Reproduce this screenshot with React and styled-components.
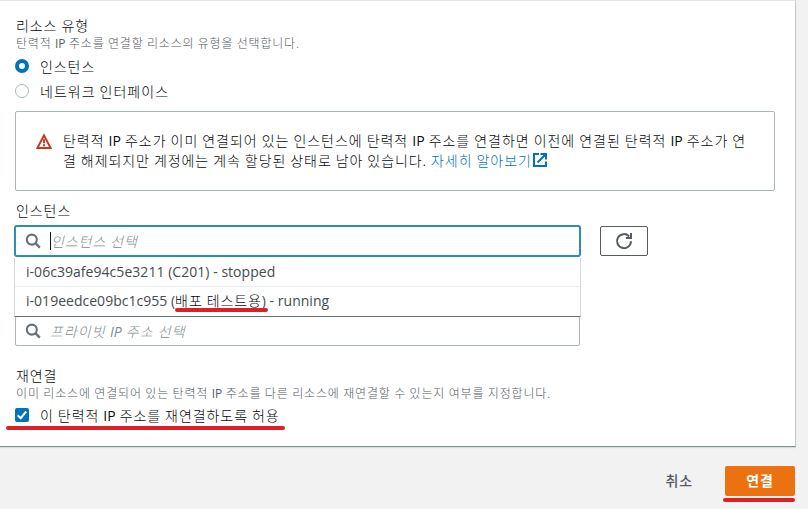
import React from "react";
import styled, { createGlobalStyle } from "styled-components";

const GlobalStyle = createGlobalStyle`
  * { box-sizing: border-box; }
  body {
    margin: 0;
    background: #f2f3f3;
    color: #16191f;
    font-family: "Open Sans", "Noto Sans CJK KR", sans-serif;
    font-size: 14px;
    overflow: hidden;
  }
`;

const Page = styled.main`
  width: 808px;
  height: 509px;
  background: #f2f2f2;
  overflow: hidden;
`;

const Panel = styled.section`
  display: flex;
  flex-direction: column;
  width: 796px;
  height: 447px;
  padding: 15px 20px 0 15px;
  background: #fff;
  border-top: 1px solid #e3e5e6;
  border-right: 1px solid #c6caca;
  border-bottom: 1px solid #879196;
  box-shadow: 0 1px 1px #d5dbdb;
`;

const Text = styled.span`
  display: block;
  white-space: nowrap;
  font-family: "Noto Sans CJK KR", sans-serif;
  font-weight: 300;
  font-size: ${(p) => p.$size || 14}px;
  line-height: ${(p) => p.$line || 20}px;
  letter-spacing: ${(p) => (p.$track === undefined ? 0.93 : p.$track)}px;
  color: ${(p) => p.$color || "#06080c"};
`;

const Latin = styled.span`
  font-family: "Open Sans", sans-serif;
  font-weight: 400;
  line-height: 1;
  letter-spacing: 0;
`;

const Heading = styled(Text).attrs({ $line: 19 })`
  padding-left: 1px;
`;

const Helper = styled(Text).attrs({ $size: 12, $line: 16, $color: "#545b64" })`
  padding-left: 1px;
`;

const Choice = styled.label`
  display: flex;
  align-items: center;
  gap: 11px;
  height: 25px;
`;

const Radio = styled.span`
  flex: none;
  width: 14px;
  height: 14px;
  margin-top: 1px;
  border-radius: 50%;
  background: #fff;
  border: ${(p) => (p.$checked ? "4px solid #0073bb" : "1px solid #aab7b8")};
`;

const Checkbox = styled.span`
  display: flex;
  flex: none;
  width: 14px;
  height: 14px;
  margin-top: 1px;
  border-radius: 2px;
  background: #0073bb;
`;

const Alert = styled.div`
  display: flex;
  gap: 10px;
  width: 760px;
  height: 80px;
  margin-top: 8px;
  padding: 18px 0 0 20px;
  border: 1px solid #aab7b8;
  border-radius: 2px;
`;

const AlertIcon = styled.svg`
  flex: none;
  width: 17px;
  height: 17px;
  margin-top: 3px;
`;

const Line = styled.div`
  display: flex;
  align-items: center;
  height: 20px;
`;

const FieldRow = styled.div`
  display: flex;
  align-items: flex-start;
  gap: 20px;
  height: 90px;
`;

const FieldHolder = styled.div`
  position: relative;
  width: 565px;
`;

const Input = styled.div`
  display: flex;
  flex: none;
  align-items: center;
  width: 565px;
  height: 30px;
  padding-left: 9px;
  border: 1px solid #aab7b8;
  border-radius: 2px;
  background: #fff;
  ${(p) =>
    p.$focused &&
    `border-color: #2a93b0; box-shadow: 0 0 0 1px #2a8caa;`}
`;

const Placeholder = styled(Text).attrs({ $color: "#7f8c8d" })`
  font-style: italic;
`;

const Caret = styled.span`
  width: 1px;
  height: 18px;
  margin-left: 9px;
  background: #16191f;
`;

const SearchIcon = styled.svg`
  flex: none;
  width: 16px;
  height: 16px;
  margin-right: ${(p) => p.$gap || 0}px;
`;

const Menu = styled.div`
  position: absolute;
  z-index: 1;
  top: 32px;
  left: -1px;
  width: 567px;
  height: 59px;
  background: #fff;
  border: 1px solid #d5dbdb;
  border-top: 0;
  border-bottom: 1px solid #687078;
`;

const Option = styled.div`
  display: flex;
  align-items: center;
  height: 28px;
  padding: 0 0 1px 11px;
  color: #444c4f;
  white-space: pre;
  letter-spacing: ${(p) => p.$track}px;

  & + & {
    height: 30px;
    padding-bottom: 2px;
    border-top: 1px solid #eaeded;
  }
`;

const Marked = styled.span`
  position: relative;
`;

const MarkedName = styled(Marked)`
  padding-bottom: 2px;
`;

const Stroke = styled.span`
  position: absolute;
  left: ${(p) => p.$left}px;
  top: ${(p) => p.$top}px;
  width: ${(p) => p.$width}px;
  height: 4px;
  border-radius: 2px;
  background: #df1f26;
`;

const RefreshButton = styled.button`
  display: flex;
  align-items: center;
  justify-content: center;
  width: 48px;
  height: 30px;
  padding: 0;
  border: 1px solid #545b64;
  border-radius: 2px;
  background: #fff;
`;

const Spacer = styled.div`
  flex: none;
  height: ${(p) => p.$height}px;
`;

const Footer = styled.footer`
  display: flex;
  justify-content: flex-end;
  align-items: center;
  gap: 32px;
  width: 795px;
  height: 30px;
  margin-top: 19px;
`;

const CancelLabel = styled(Text)`
  padding-bottom: 3px;
  font-weight: 500;
`;

const SubmitButton = styled.button`
  position: relative;
  display: flex;
  align-items: center;
  justify-content: center;
  width: 70px;
  height: 30px;
  padding: 0 0 3px;
  border: 0;
  border-radius: 2px;
  background: #ec7211;
`;

const SubmitLabel = styled(Text)`
  font-weight: 700;
`;

function Search({ gap }) {
  return (
    <SearchIcon $gap={gap} viewBox="0 0 16 16" fill="none" stroke="#687078" strokeWidth="2.1">
      <circle cx="6.8" cy="6.6" r="5" />
      <path d="M10.4 10.2l4.4 4.4" strokeWidth="2.4" />
    </SearchIcon>
  );
}

function External() {
  return (
    <svg width="16" height="16" viewBox="0 0 16 16" fill="none" stroke="#0073bb" strokeWidth="2">
      <path d="M7 2H2v12h12V9.5M8.5 2H14v5.5M14 2L5.5 10.5" />
    </svg>
  );
}

export default function App() {
  return (
    <Page>
      <GlobalStyle />
      <Panel>
        <Heading>리소스 유형</Heading>
        <Helper $track={0.8}>
          탄력적 <Latin>IP</Latin> 주소를 연결할 리소스의 유형을 선택합니다.
        </Helper>
        <Spacer $height={2} />
        <Choice>
          <Radio $checked />
          <Text>인스턴스</Text>
        </Choice>
        <Choice>
          <Radio />
          <Text $track={1}>네트워크 인터페이스</Text>
        </Choice>
        <Alert>
          <AlertIcon viewBox="0 0 17 17" fill="none" stroke="#c2391f" strokeWidth="2">
            <path d="M8 2.4L14.6 15H1.4z" />
            <path d="M8 6.2v4M8 11.3v2" strokeWidth="2" />
          </AlertIcon>
          <div>
            <Line>
              <Text $track={0.96}>
                탄력적 <Latin>IP</Latin> 주소가 이미 연결되어 있는 인스턴스에 탄력적 <Latin>IP</Latin> 주소를
                연결하면 이전에 연결된 탄력적 <Latin>IP</Latin> 주소가 연
              </Text>
            </Line>
            <Line>
              <Text>결 해제되지만 계정에는 계속 할당된 상태로 남아 있습니다.&nbsp;</Text>
              <Text $color="#0073bb">자세히 알아보기</Text>
              <External />
            </Line>
          </div>
        </Alert>
        <Spacer $height={10} />
        <Heading>인스턴스</Heading>
        <Spacer $height={6} />
        <FieldRow>
          <FieldHolder>
            <Input $focused>
              <Search />
              <Caret />
              <Placeholder>인스턴스 선택</Placeholder>
            </Input>
            <Menu>
              <Option $track={0.04}>i-06c39afe94c5e3211 (C201) - stopped</Option>
              <Option $track={0.02}>
                {"i-019eedce09bc1c955 ("}
                <MarkedName>
                  <Text $track={0.9}>배포 테스트용</Text>
                  <Stroke $left={0} $top={18} $width={93} />
                </MarkedName>
                {") - running"}
              </Option>
            </Menu>
          </FieldHolder>
          <RefreshButton aria-label="refresh">
            <svg width="18" height="18" viewBox="0 0 18 18" fill="none" stroke="#545b64" strokeWidth="2">
              <path d="M16 9.2A7 7 0 1 1 14 4.2" />
              <path d="M11 6h5V1" />
              <path d="M13 3.5l2.5 2.5h-2.5z" fill="#545b64" stroke="none" />
            </svg>
          </RefreshButton>
        </FieldRow>
        <Input>
          <Search gap={9} />
          <Placeholder $track={1.05}>
            프라이빗 <Latin>IP</Latin> 주소 선택
          </Placeholder>
        </Input>
        <Spacer $height={20} />
        <Heading>재연결</Heading>
        <Helper $track={0.84}>
          이미 리소스에 연결되어 있는 탄력적 <Latin>IP</Latin> 주소를 다른 리소스에 재연결할 수 있는지 여부를
          지정합니다.
        </Helper>
        <Spacer $height={1} />
        <Marked>
          <Choice>
            <Checkbox>
              <svg width="14" height="14" viewBox="0 0 14 14" fill="none" stroke="#fff" strokeWidth="2">
                <path d="M2.7 7.2l3 3L11.2 3.5" />
              </svg>
            </Checkbox>
            <Text>
              이 탄력적 <Latin>IP</Latin> 주소를 재연결하도록 허용
            </Text>
          </Choice>
          <Stroke $left={-9} $top={24} $width={279} />
        </Marked>
      </Panel>
      <Footer>
        <CancelLabel $color="#545b64">취소</CancelLabel>
        <SubmitButton>
          <SubmitLabel $color="#fff">연결</SubmitLabel>
          <Stroke $left={-2} $top={32} $width={72} />
        </SubmitButton>
      </Footer>
    </Page>
  );
}
